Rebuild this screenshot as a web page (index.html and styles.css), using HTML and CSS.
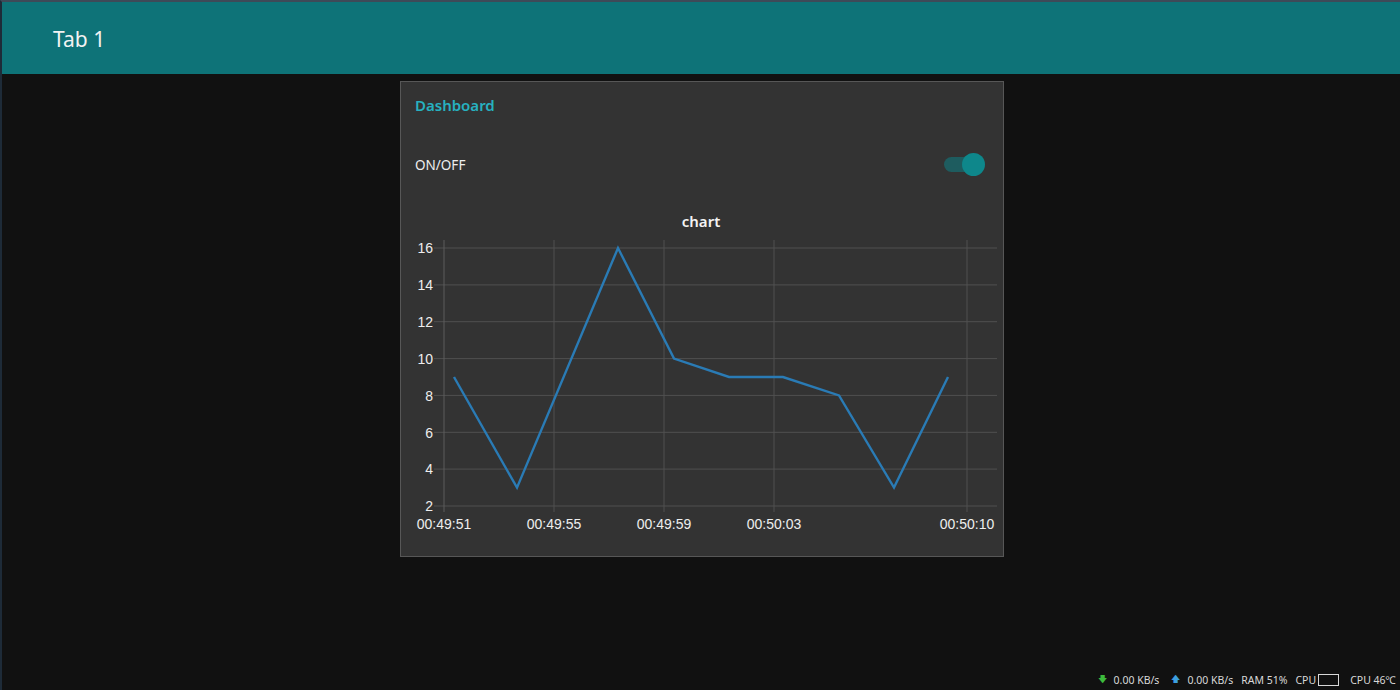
FILE: index.html
```html
<!DOCTYPE html>
<html>
<head>
<meta charset="utf-8">
<link rel="stylesheet" href="styles.css">
</head>
<body>
<div class="frame">
  <header class="topbar"><span class="tab-title">Tab 1</span></header>
  <main class="content">
    <section class="card">
      <div class="card-title">Dashboard</div>
      <div class="switch-row">
        <span class="switch-label">ON/OFF</span>
        <span class="switch"><span class="track"></span><span class="knob"></span></span>
      </div>
      <svg class="chart" width="602" height="366" viewBox="0 0 602 366">
        <text x="300" y="37" class="chart-title" text-anchor="middle">chart</text>
        <g class="grid">
          <line x1="33" y1="58" x2="596" y2="58"/>
          <line x1="33" y1="94.9" x2="596" y2="94.9"/>
          <line x1="33" y1="131.7" x2="596" y2="131.7"/>
          <line x1="33" y1="168.6" x2="596" y2="168.6"/>
          <line x1="33" y1="205.4" x2="596" y2="205.4"/>
          <line x1="33" y1="242.3" x2="596" y2="242.3"/>
          <line x1="33" y1="279.1" x2="596" y2="279.1"/>
          <line x1="33" y1="316" x2="596" y2="316"/>
          <line x1="153" y1="50" x2="153" y2="322"/>
          <line x1="263" y1="50" x2="263" y2="322"/>
          <line x1="373" y1="50" x2="373" y2="322"/>
          <line x1="566" y1="50" x2="566" y2="322"/>
        </g>
        <line class="axis" x1="43" y1="50" x2="43" y2="322"/>
        <g class="ylabels" text-anchor="end">
          <text x="32" y="63">16</text>
          <text x="32" y="100">14</text>
          <text x="32" y="137">12</text>
          <text x="32" y="173.5">10</text>
          <text x="32" y="210.5">8</text>
          <text x="32" y="247.5">6</text>
          <text x="32" y="284">4</text>
          <text x="32" y="321">2</text>
        </g>
        <g class="xlabels" text-anchor="middle">
          <text x="43" y="339">00:49:51</text>
          <text x="153" y="339">00:49:55</text>
          <text x="263" y="339">00:49:59</text>
          <text x="373" y="339">00:50:03</text>
          <text x="566" y="339">00:50:10</text>
        </g>
        <polyline class="series" points="53,187 116,297.6 217,58 273,168.6 328,187 382,187 438,205.4 493,297.6 547,187"/>
      </svg>
    </section>
  </main>
  <footer class="status">
    <span class="arrow down">&#129095;</span><span class="val">0.00 KB/s</span>
    <span class="arrow up">&#129093;</span><span class="val">0.00 KB/s</span>
    <span class="ram">RAM 51%</span>
    <span class="cpu">CPU<span class="cpu-box"></span></span>
    <span class="temp">CPU 46℃</span>
  </footer>
</div>
</body>
</html>
```

FILE: styles.css
```css
html, body {
  margin: 0;
  padding: 0;
  background: #111111;
}
.frame {
  height: 690px;
  box-sizing: border-box;
  border-top: 2px solid #3e4a58;
  border-left: 2px solid #1e2b38;
  display: flex;
  flex-direction: column;
  font-family: "Noto Sans", "Open Sans", sans-serif;
  overflow: hidden;
}
.topbar {
  height: 72px;
  background: #0e7378;
  display: flex;
  align-items: center;
  padding-left: 51px;
  flex-shrink: 0;
}
.tab-title {
  color: #f2f2f2;
  font-size: 21px;
  margin-top: 2px;
}
.content {
  flex: 1;
  padding-top: 7px;
  display: flex;
  justify-content: center;
  align-items: flex-start;
}
.card {
  width: 602px;
  height: 474px;
  background: #333333;
  border: 1px solid #575757;
  margin-left: 2px;
  display: flex;
  flex-direction: column;
}
.card-title {
  height: 46px;
  line-height: 46px;
  padding-left: 14px;
  color: #27b1c0;
  font-size: 15px;
  font-weight: 600;
}
.switch-row {
  margin-top: 12px;
  height: 50px;
  display: flex;
  align-items: center;
  justify-content: space-between;
  padding: 0 18px 0 14px;
}
.switch-label {
  color: #eeeeee;
  font-size: 13.5px;
}
.switch {
  position: relative;
  width: 41px;
  height: 24px;
}
.track {
  position: absolute;
  left: 0;
  top: 4px;
  width: 34px;
  height: 15px;
  border-radius: 8px;
  background: #1e5c5f;
}
.knob {
  position: absolute;
  right: 0;
  top: 0;
  width: 23px;
  height: 23px;
  border-radius: 50%;
  background: #0e878b;
}
.chart {
  display: block;
  font-family: "Liberation Sans", Arial, sans-serif;
}
.chart-title {
  fill: #f4f4f4;
  font-family: "Noto Sans", "Open Sans", sans-serif;
  font-size: 15px;
  font-weight: 600;
}
.grid line {
  stroke: #505050;
  stroke-width: 1;
}
.axis {
  stroke: #5c5c5c;
  stroke-width: 1;
}
.ylabels text, .xlabels text {
  fill: #eeeeee;
  font-size: 14px;
}
.series {
  fill: none;
  stroke: #2a7bb5;
  stroke-width: 2.4;
  stroke-linejoin: miter;
}
.status {
  height: 20px;
  flex-shrink: 0;
  display: flex;
  align-items: center;
  justify-content: flex-end;
  padding-right: 4px;
  color: #d8d8d8;
  font-size: 10.5px;
  font-family: "Noto Sans", sans-serif;
  white-space: nowrap;
}
.arrow {
  font-size: 9px;
}
.arrow.down { color: #3dbb3d; }
.arrow.up { color: #3da0e0; margin-left: 12px; }
.val { margin-left: 7px; }
.ram { margin-left: 8px; }
.cpu {
  display: flex;
  align-items: center;
  gap: 2px;
  margin-left: 8px;
}
.cpu-box {
  display: inline-block;
  width: 19px;
  height: 10px;
  border: 1px solid #d8d8d8;
}
.temp { margin-left: 11px; }
```
